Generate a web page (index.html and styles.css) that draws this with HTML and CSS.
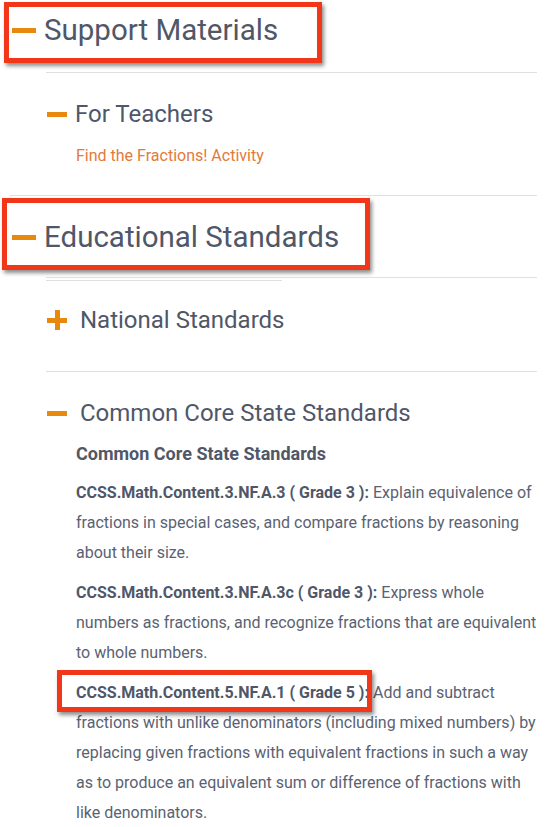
FILE: index.html
```html
<!DOCTYPE html>
<html>
<head>
<meta charset="utf-8">
<link rel="stylesheet" href="styles.css">
</head>
<body>
<div class="page">
  <section class="sec">
    <div class="sec-head">
      <span class="ico-minus big"></span>
      <h2 class="sec-title">Support Materials</h2>
      <span class="annot annot-1"></span>
    </div>
    <div class="sub-list">
      <div class="sub sub-teachers">
        <div class="sub-head tight">
          <span class="ico-minus"></span>
          <h3 class="sub-title">For Teachers</h3>
        </div>
        <a class="link" href="#">Find the Fractions! Activity</a>
      </div>
    </div>
  </section>

  <section class="sec sec-2">
    <div class="sec-head">
      <span class="ico-minus big"></span>
      <h2 class="sec-title">Educational Standards</h2>
      <span class="annot annot-2"></span>
    </div>
    <div class="sub-list">
      <div class="short-rule"></div>
      <div class="sub sub-national">
        <div class="sub-head">
          <span class="ico-plus"></span>
          <h3 class="sub-title">National Standards</h3>
        </div>
      </div>
      <div class="sub sub-ccss">
        <div class="sub-head">
          <span class="ico-minus"></span>
          <h3 class="sub-title">Common Core State Standards</h3>
        </div>
        <h4 class="std-title">Common Core State Standards</h4>
        <p class="std"><b>CCSS.Math.Content.3.NF.A.3 ( Grade 3 ):</b> Explain equivalence of fractions in special cases, and compare fractions by reasoning about their size.</p>
        <p class="std"><b>CCSS.Math.Content.3.NF.A.3c ( Grade 3 ):</b> Express whole numbers as fractions, and recognize fractions that are equivalent to whole numbers.</p>
        <p class="std"><b class="code-wrap">CCSS.Math.Content.5.NF.A.1 ( Grade 5 ):<span class="annot annot-3"></span></b> Add and subtract fractions with unlike denominators (including mixed numbers) by replacing given fractions with equivalent fractions in such a way as to produce an equivalent sum or difference of fractions with like denominators.</p>
      </div>
    </div>
  </section>
</div>
</body>
</html>
```

FILE: styles.css
```css
html, body {
  margin: 0;
  padding: 0;
  background: #ffffff;
}

body {
  font-family: Roboto, "Liberation Sans", sans-serif;
  color: #4f5769;
  width: 546px;
  height: 827px;
  overflow: hidden;
}

.page {
  display: flex;
  flex-direction: column;
}

.sec-head {
  position: relative;
  display: flex;
  align-items: center;
  gap: 8px;
  height: 60px;
  padding-left: 12px;
}

.sec-title {
  margin: 0;
  font-size: 29.5px;
  font-weight: 400;
  line-height: 60px;
  color: #4f5769;
}

.ico-minus {
  display: block;
  width: 20px;
  height: 5px;
  background: #e8890f;
  flex: none;
}

.ico-minus.big {
  width: 24px;
  height: 5px;
}

.ico-plus {
  position: relative;
  display: block;
  width: 20px;
  height: 20px;
  flex: none;
}

.ico-plus::before,
.ico-plus::after {
  content: "";
  position: absolute;
  background: #e8890f;
}

.ico-plus::before {
  left: 0;
  top: 8px;
  width: 20px;
  height: 5px;
}

.ico-plus::after {
  left: 8px;
  top: 0;
  width: 5px;
  height: 20px;
}

.annot {
  position: absolute;
  border: 5px solid #f2361a;
  box-shadow: 2px 3px 4px rgba(0, 0, 0, 0.45);
  box-sizing: border-box;
  pointer-events: none;
}

.annot-1 {
  left: 4px;
  top: 2px;
  width: 318px;
  height: 61px;
}

.annot-2 {
  left: 2px;
  top: -9px;
  width: 368px;
  height: 72px;
}

.sub-list {
  margin-left: 46px;
  margin-right: 9px;
  border-top: 1px solid #e0e0e0;
  margin-top: 12px;
}

.sec-2 {
  border-top: 1px solid #e0e0e0;
  margin-left: 10px;
  margin-right: 9px;
}

.sec-2 .sec-head {
  margin-left: -10px;
  margin-top: 11px;
}

.sec-2 .sub-list {
  margin-left: 36px;
  margin-right: 0;
  margin-top: 10px;
}

.short-rule {
  width: 236px;
  height: 0;
  margin-top: 2px;
  border-top: 1px solid #e0e0e0;
}

.sub {
  display: flex;
  flex-direction: column;
  align-items: flex-start;
}

.sub + .sub {
  border-top: 1px solid #e0e0e0;
}

.sub-head {
  display: flex;
  align-items: center;
  gap: 13px;
  height: 30px;
  padding-left: 1px;
}

.sub-head.tight {
  gap: 8px;
}

.sub-title {
  margin: 0;
  font-size: 24px;
  font-weight: 400;
  line-height: 30px;
  color: #4f5769;
}

.sub-teachers {
  padding-top: 26px;
  padding-bottom: 24px;
}

.link {
  margin-top: 12px;
  margin-left: 30px;
  font-size: 16px;
  line-height: 30px;
  color: #e27a3c;
  text-decoration: none;
}

.sub-national {
  padding-top: 24px;
  padding-bottom: 36px;
}

.sub-ccss {
  padding-top: 26px;
}

.std-title {
  margin: 11px 0 0 30px;
  font-size: 18px;
  font-weight: 700;
  line-height: 30px;
  color: #4f5769;
}

.std {
  margin: 9px 0 0 30px;
  font-size: 16px;
  line-height: 30px;
  color: #5a6272;
}

.std + .std {
  margin-top: 10px;
}

.std b {
  color: #4f5769;
  font-weight: 700;
}

.code-wrap {
  position: relative;
}

.annot-3 {
  left: -19px;
  top: -13px;
  width: 315px;
  height: 42px;
}
```
